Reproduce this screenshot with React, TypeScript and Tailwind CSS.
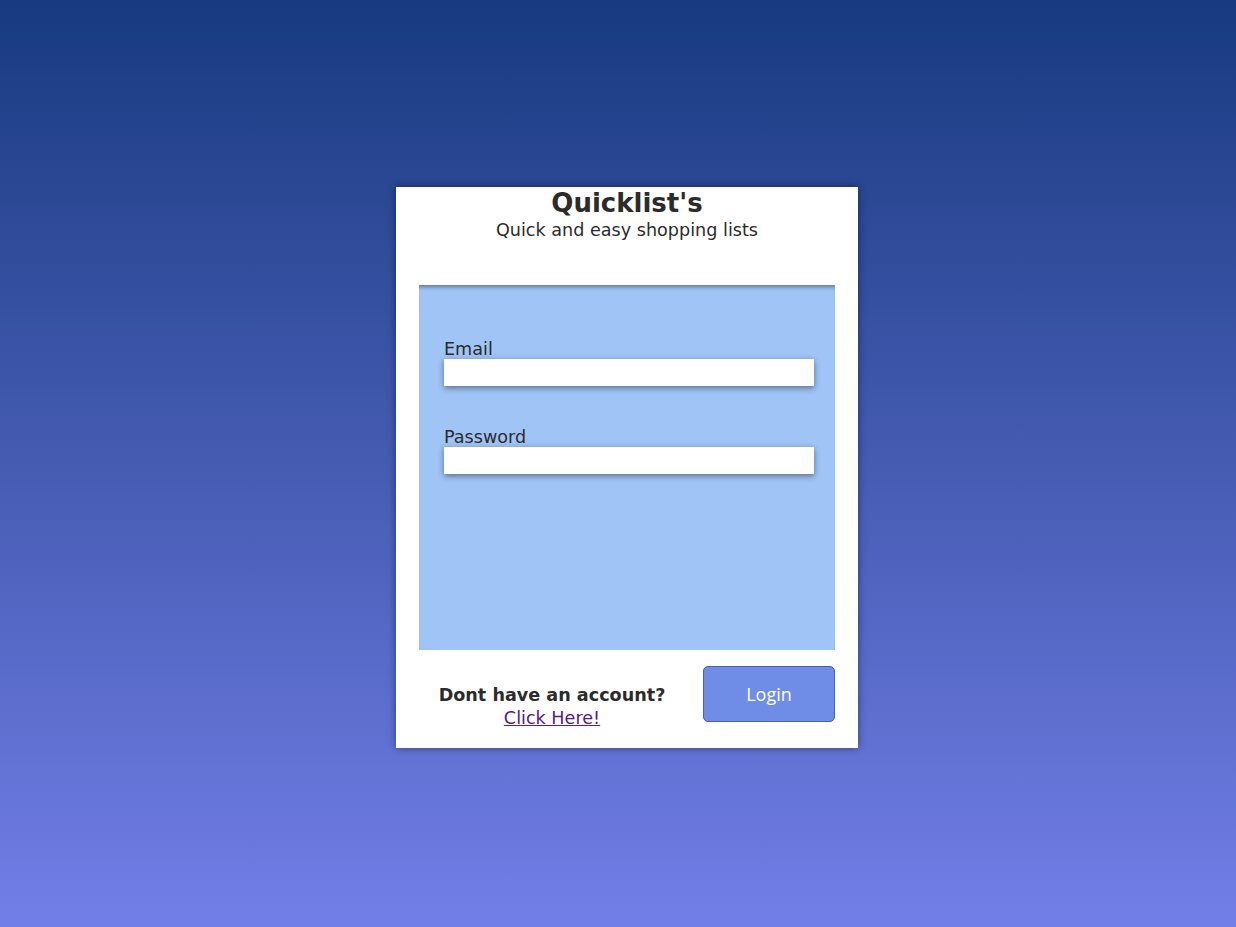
import React from 'react';

// Login card for Quicklist's
function Field({ label, type }: { label: string; type: string }) {
  return (
    <div className="flex flex-col">
      <label className="text-[17.6px] leading-[20px] text-[#2b2b2b]">{label}</label>
      <input
        type={type}
        className="h-[27px] w-[370px] bg-white shadow-[0_2px_6px_rgba(0,0,0,0.45)] outline-none"
      />
    </div>
  );
}

export default function App() {
  return (
    <div
      className="min-h-[927px] w-full bg-gradient-to-b from-[#173a80] to-[#737fe8] pt-[187px] pl-[396px]"
      style={{ fontFamily: '"DejaVu Sans", Verdana, sans-serif' }}
    >
      <div className="flex h-[561px] w-[462px] flex-col bg-white px-[23px] shadow-[0_0_8px_rgba(0,0,0,0.45)]">
        <div className="flex flex-col items-center text-[#2b2b2b]">
          <h1 className="text-[26px] font-bold leading-[32px]">Quicklist's</h1>
          <p className="text-[17.6px] leading-[22px]">Quick and easy shopping lists</p>
        </div>

        <div className="mt-[44px] flex h-[365px] flex-col gap-[41px] bg-[#a0c4f6] px-[25px] pt-[54px] shadow-[inset_0_5px_4px_-3px_rgba(0,0,0,0.4)]">
          <Field label="Email" type="email" />
          <Field label="Password" type="password" />
        </div>

        <div className="mt-[16px] flex items-start">
          <div className="flex w-[266px] flex-col items-center pt-[18px]">
            <span className="text-[17.6px] font-bold leading-[23px] text-[#2b2b2b]">Dont have an account?</span>
            <a href="#" className="text-[17.6px] leading-[23px] text-[#551a8b] underline">
              Click Here!
            </a>
          </div>
          <button
            className="ml-auto h-[56px] w-[132px] rounded-[5px] border border-[#4a5fb5] bg-[#6f8ce6] text-[18px] text-white"
            style={{ fontFamily: '"Open Sans", "Noto Sans", sans-serif' }}
          >
            Login
          </button>
        </div>
      </div>
    </div>
  );
}
